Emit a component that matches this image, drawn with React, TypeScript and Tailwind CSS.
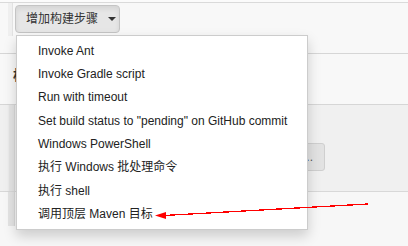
import React from "react";

const items = [
  "Invoke Ant",
  "Invoke Gradle script",
  "Run with timeout",
  'Set build status to "pending" on GitHub commit',
  "Windows PowerShell",
  "执行 Windows 批处理命令",
  "执行 shell",
  "调用顶层 Maven 目标",
];

export default function App() {
  return (
    <div
      className="relative w-[408px] h-[246px] overflow-hidden bg-[#f8f8f8] text-[#333]"
      style={{ fontFamily: '"Liberation Sans", Arial, "Noto Sans CJK SC", sans-serif' }}
    >
      {/* top strip */}
      <div className="h-[3px] bg-[#fbfbfb] border-b border-[#dadada]" />
      {/* row 1 */}
      <div className="flex h-[51px] border-b border-[#d6d6d6]">
        <div className="w-[8px]" />
        <div className="w-[5px] h-[33px] bg-[#efefef] border-r border-[#e2e2e2]" />
        <div className="pl-[2px] pt-[2px]">
          <div className="flex items-center h-[28px] w-[105px] pl-[10px] rounded-[4px] border border-[#c4c4c4] bg-[#e6e6e6] shadow-[inset_0_3px_5px_rgba(0,0,0,0.08)] text-[12px]">
            <span className="tracking-[0px]">增加构建步骤</span>
            <span className="ml-[10px] w-0 h-0 border-l-[4px] border-r-[4px] border-t-[4px] border-l-transparent border-r-transparent border-t-[#333]" />
          </div>
        </div>
      </div>
      {/* row 2 */}
      <div className="h-[51px] border-b border-[#d6d6d6] pl-[13px] pt-[9px]">
        <span className="text-[14px] font-bold text-[#333]">构建</span>
      </div>
      {/* row 3 */}
      <div className="flex h-[87px] bg-[#f0f0f0] border-b border-[#d8d8d8]">
        <div className="w-[8px]" />
        <div className="w-[7px] h-full bg-[#e4e4e4] border-r border-[#d9d9d9] border-l border-l-[#ececec]" />
        <div className="flex-1 flex justify-end pr-[83px] pt-[38px]">
          <div className="flex items-center justify-end h-[28px] w-[80px] pr-[11px] rounded-[3px] border border-[#cfcfcf] bg-[#e2e2e2] text-[12px] text-[#555]">
            ...
          </div>
        </div>
      </div>
      {/* row 4 */}
      <div className="flex h-[54px] bg-[#f7f7f7]">
        <div className="w-[8px]" />
        <div className="w-[7px] h-[34px] bg-[#e4e4e4] border-r border-[#d9d9d9]" />
      </div>

      {/* dropdown menu */}
      <div className="absolute left-[16px] top-[35px] w-[292px] bg-white border border-[#cccccc] shadow-[0_6px_12px_rgba(0,0,0,0.175)] pt-[3px] pb-[3px]">
        {items.map((t) => (
          <div
            key={t}
            className="h-[23.33px] flex items-center pl-[21px] text-[12px] text-[#222] whitespace-nowrap"
          >
            {t}
          </div>
        ))}
      </div>

      {/* red arrow */}
      <svg
        className="absolute left-0 top-0 pointer-events-none"
        width="408"
        height="246"
        viewBox="0 0 408 246"
      >
        <line
          x1="164"
          y1="215.5"
          x2="368"
          y2="204"
          stroke="#ff0000"
          strokeWidth="1.3"
          shapeRendering="crispEdges"
        />
        <polygon points="155,215.6 166,212 166,219" fill="#ff0000" />
      </svg>
    </div>
  );
}
